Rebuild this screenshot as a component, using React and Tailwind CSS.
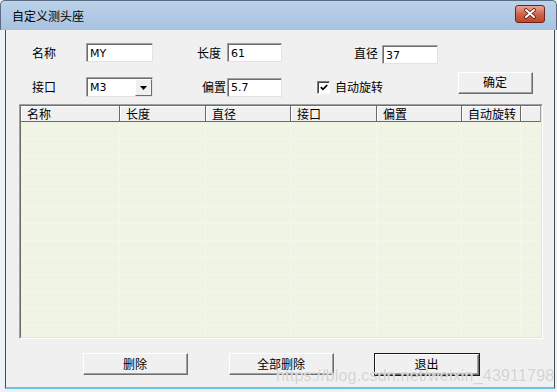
import React from "react";

const cjk = "font-['SimSun','Noto_Sans_CJK_SC',sans-serif]";
const latin = "font-['Tahoma','DejaVu_Sans',sans-serif]";

const cols = [
  { name: "名称", w: "w-[99px]" },
  { name: "长度", w: "w-[86px]" },
  { name: "直径", w: "w-[85px]" },
  { name: "接口", w: "w-[86px]" },
  { name: "偏置", w: "w-[85px]" },
  { name: "自动旋转", w: "w-[59px]" },
];

function TextBox({ value, className = "" }) {
  return (
    <div
      className={`h-[19px] border border-t-[#a0a0a0] border-l-[#a0a0a0] border-b-[#e3e3e3] border-r-[#e3e3e3] bg-white ${className}`}
    >
      <div className="h-full border-t border-l border-[#6d6d6d] border-b-0 border-r-0 pl-[2px] flex items-center">
        <span className={`${latin} text-[11px] leading-none text-black`}>{value}</span>
      </div>
    </div>
  );
}

function Button({ label, className = "", focus = false }) {
  return (
    <div className={`${focus ? "border border-[#1a1a1a]" : ""} ${className}`}>
      <div className="h-full border border-t-white border-l-white border-b-[#6d6d6d] border-r-[#6d6d6d] bg-[#f0f0f0]">
        <div className="h-full border-b border-r border-[#a0a0a0] border-t-0 border-l-0 flex items-center justify-center">
          <span className={`${cjk} text-[12px] leading-none text-black`}>{label}</span>
        </div>
      </div>
    </div>
  );
}

export default function App() {
  const rows = Array.from({ length: 14 });
  return (
    <div className="relative w-[557px] h-[392px] overflow-hidden bg-[#eef2f7] flex flex-col">
      {/* Title bar */}
      <div className="h-[30px] shrink-0 bg-gradient-to-b from-[#bcd2ea] to-[#a8c2e0] flex items-center pl-[11px] pr-[11px] rounded-t-[5px] border-t border-l border-r border-[#5a6d84]">
        <span className={`${cjk} text-[12px] text-black mt-[1px]`}>自定义测头座</span>
        <div className="ml-auto w-[30px] h-[18px] rounded-[3px] border border-[#6b2418] bg-gradient-to-b from-[#e9a596] via-[#d1634c] to-[#c0442c] flex items-center justify-center mt-[-4px]">
          <svg width="14" height="11" viewBox="0 0 14 11">
            <path d="M3 2 L11 9 M11 2 L3 9" stroke="#5a1a10" strokeWidth="3.6" strokeLinecap="round" />
            <path d="M3 2 L11 9 M11 2 L3 9" stroke="#ffffff" strokeWidth="2" strokeLinecap="round" />
          </svg>
        </div>
      </div>

      {/* Client area */}
      <div className="flex-1 ml-[5px] mr-[2px] mb-[3px] border-l border-r border-[#3f4a57] border-b-2 border-b-[#6cc2e8] bg-[#f0f0f0] flex flex-col">
        {/* Row 1 */}
        <div className="mt-[13px] h-[19px] flex items-center">
          <span className={`${cjk} text-[12px] text-black ml-[26px] w-[54px]`}>名称</span>
          <TextBox value="MY" className="w-[67px]" />
          <span className={`${cjk} text-[12px] text-black ml-[44px] w-[30px]`}>长度</span>
          <TextBox value="61" className="w-[55px]" />
          <span className={`${cjk} text-[12px] text-black ml-[72px] w-[28px]`}>直径</span>
          <TextBox value="37" className="w-[56px] mt-[4px]" />
        </div>

        {/* Row 2 */}
        <div className="mt-[15px] h-[20px] flex items-center">
          <span className={`${cjk} text-[12px] text-black ml-[26px] w-[54px]`}>接口</span>
          <div className="w-[67px] h-[20px] border border-t-[#a0a0a0] border-l-[#a0a0a0] border-b-[#e3e3e3] border-r-[#e3e3e3] bg-white">
            <div className="h-full border-t border-l border-[#6d6d6d] border-b-0 border-r-0 pl-[2px] flex items-center">
              <span className={`${latin} text-[11px] leading-none text-black`}>M3</span>
              <div className="ml-auto w-[17px] h-full border border-t-white border-l-white border-b-[#6d6d6d] border-r-[#6d6d6d] bg-[#f0f0f0] flex items-center justify-center">
                <svg width="7" height="4" viewBox="0 0 7 4">
                  <path d="M0 0 H7 L3.5 4 Z" fill="#000" />
                </svg>
              </div>
            </div>
          </div>
          <span className={`${cjk} text-[12px] text-black ml-[49px] w-[25px]`}>偏置</span>
          <TextBox value="5.7" className="w-[55px]" />
          <div className="ml-[35px] w-[13px] h-[13px] border border-t-[#808080] border-l-[#808080] border-b-white border-r-white bg-white">
            <div className="w-full h-full border border-t-[#404040] border-l-[#404040] border-b-0 border-r-0 flex items-center justify-center">
              <svg width="8" height="7" viewBox="0 0 8 7">
                <path d="M0.8 3.2 L3 5.4 L7.2 1" stroke="#000" strokeWidth="1.7" fill="none" />
              </svg>
            </div>
          </div>
          <span className={`${cjk} text-[12px] text-black ml-[5px]`}>自动旋转</span>
          <Button label="确定" className="ml-auto mr-[21px] w-[75px] h-[22px] mt-[-9px]" />
        </div>

        {/* List */}
        <div className="mt-[7px] ml-[13px] mr-[11px] h-[235px] border border-t-[#a0a0a0] border-l-[#a0a0a0] border-b-white border-r-white">
          <div className="h-full border border-t-[#6d6d6d] border-l-[#6d6d6d] border-b-[#e3e3e3] border-r-[#e3e3e3] flex flex-col overflow-hidden">
            <div className="h-[16px] shrink-0 flex bg-[#f0f0f0]">
              {cols.map((c) => (
                <div
                  key={c.name}
                  className={`${c.w} h-full border-r border-b border-r-[#696969] border-b-[#696969] shadow-[inset_1px_1px_0_#ffffff] pl-[6px] flex items-center`}
                >
                  <span className={`${cjk} text-[12px] leading-none text-black`}>{c.name}</span>
                </div>
              ))}
              <div className="flex-1 h-full border-r border-b border-r-[#a0a0a0] border-b-[#696969] shadow-[inset_1px_1px_0_#ffffff]" />
            </div>
            <div className="flex-1 bg-[#eff4e5] overflow-hidden">
              {rows.map((_, i) => (
                <div key={i} className="h-[17px] flex border-b border-[#f3f7ec]">
                  {cols.map((c) => (
                    <div key={c.name} className={`${c.w} h-full border-r border-[#f3f7ec]`} />
                  ))}
                  <div className="flex-1" />
                </div>
              ))}
            </div>
          </div>
        </div>

        {/* Bottom buttons */}
        <div className="mt-[14px] h-[22px] flex">
          <Button label="删除" className="ml-[77px] w-[105px] h-[22px]" />
          <Button label="全部删除" className="ml-[41px] w-[105px] h-[22px]" />
          <Button label="退出" focus className="ml-[40px] w-[106px] h-[23px]" />
        </div>
      </div>

      {/* Watermark */}
      <span className="absolute left-[276px] top-[364px] font-['Liberation_Sans',sans-serif] text-[16px] tracking-[0.2px] text-[#d2d2d2] [text-shadow:0_0_1px_#ffffff] pointer-events-none">
        https://blog.csdn.net/weixin_43911798
      </span>
    </div>
  );
}
